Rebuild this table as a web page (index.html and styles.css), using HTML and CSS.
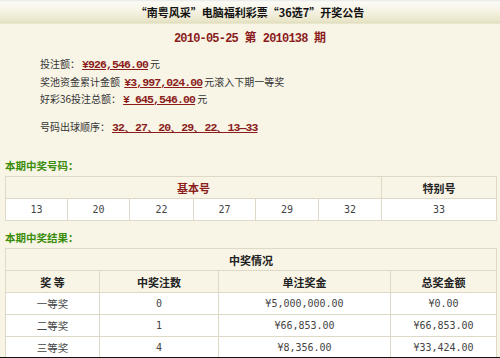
FILE: index.html
```html
<!DOCTYPE html>
<html lang="zh">
<head>
<meta charset="utf-8">
<link rel="stylesheet" href="styles.css">
</head>
<body>
<div class="page">
  <div class="topbar">“南粤风采”电脑福利彩票“36选7”开奖公告</div>
  <div class="date">2010-05-25 <span class="cj">第</span> 2010138 <span class="cj">期</span></div>
  <div class="info">
    <div class="line">投注额：<span class="val">¥926,546.00</span>元</div>
    <div class="line">奖池资金累计金额 <span class="val">¥3,997,024.00</span>元滚入下期一等奖</div>
    <div class="line">好彩36投注总额：<span class="val">¥ 645,546.00</span>元</div>
    <div class="line gap">号码出球顺序：<span class="val">32、27、20、29、22、13—33</span></div>
  </div>
  <div class="heading h1">本期中奖号码：</div>
  <table class="tbl nums">
    <colgroup>
      <col class="c1"><col class="c2"><col class="c3"><col class="c4"><col class="c5"><col class="c6"><col class="c7">
    </colgroup>
    <tr class="head"><th colspan="6" class="red">基本号</th><th>特别号</th></tr>
    <tr class="row"><td>13</td><td>20</td><td>22</td><td>27</td><td>29</td><td>32</td><td>33</td></tr>
  </table>
  <div class="heading h2">本期中奖结果：</div>
  <table class="tbl prize">
    <colgroup>
      <col class="p1"><col class="p2"><col class="p3"><col class="p4">
    </colgroup>
    <tr class="head"><th colspan="4">中奖情况</th></tr>
    <tr class="head"><th>奖 等</th><th>中奖注数</th><th>单注奖金</th><th>总奖金额</th></tr>
    <tr class="row"><td>一等奖</td><td>0</td><td>¥5,000,000.00</td><td>¥0.00</td></tr>
    <tr class="row"><td>二等奖</td><td>1</td><td>¥66,853.00</td><td>¥66,853.00</td></tr>
    <tr class="row"><td>三等奖</td><td>4</td><td>¥8,356.00</td><td>¥33,424.00</td></tr>
  </table>
</div>
</body>
</html>
```
FILE: styles.css
```css
html, body {
  margin: 0;
  padding: 0;
  background: #f8f5e7;
}
.page {
  width: 500px;
  height: 357px;
  overflow: hidden;
  border-bottom: 1px solid #111;
  font-family: "Noto Sans CJK SC", "Liberation Sans", sans-serif;
  font-size: 11px;
  color: #222;
  background: #f8f5e7;
}
.topbar {
  height: 24px;
  line-height: 25px;
  text-align: center;
  font-weight: bold;
  font-size: 11px;
  color: #111;
  background: linear-gradient(to bottom, #e8e8e8 0px, #fbfbf6 2px, #f6f4e6 10px, #ebe7cc 20px, #e2dfc0 23px, #f1eedc 24px);
}
.date {
  margin-top: 5px;
  height: 16px;
  line-height: 16px;
  text-align: center;
  font-family: "Liberation Mono", monospace;
  font-size: 12px;
  font-weight: bold;
  color: #8b1c1c;
  letter-spacing: -0.8px;
}
.date .cj {
  font-family: "Noto Sans CJK SC", sans-serif;
  font-size: 12px;
  letter-spacing: 0;
}
.info {
  margin-top: 10px;
  padding-left: 40px;
  font-size: 10px;
}
.line {
  height: 17.5px;
  line-height: 17px;
  color: #333;
}
.line.gap {
  margin-top: 10px;
}
.val {
  font-family: "Liberation Mono", monospace;
  font-size: 11.5px;
  font-weight: bold;
  color: #8b1c1c;
  text-decoration: underline;
  letter-spacing: -0.9px;
  padding: 0 2px;
}
.heading {
  padding-left: 5px;
  color: #3a8c0a;
  font-weight: bold;
  font-size: 10.5px;
  height: 14px;
  line-height: 14px;
}
.h1 { margin-top: 24px; }
.h2 { margin-top: 10px; }
.tbl {
  margin: 3px 0 0 5px;
  width: 491px;
  border-collapse: collapse;
  table-layout: fixed;
}
.tbl th, .tbl td {
  border: 1px solid #ddd9c6;
  height: 21px;
  padding: 0;
  text-align: center;
  font-size: 11px;
}
.tbl th {
  font-weight: bold;
  color: #222;
}
.tbl th.red {
  color: #8b1c1c;
}
.tbl .row td {
  background: #fff;
  color: #444;
}
.nums .row td {
  font-family: "DejaVu Sans Mono", monospace;
  font-size: 10px;
}
.prize .row td {
  font-size: 10.5px;
}
.prize .row td:nth-child(n+2) {
  font-family: "DejaVu Sans Mono", monospace;
  font-size: 10px;
}
.c1 { width: 62px; }
.c2 { width: 62px; }
.c3 { width: 64px; }
.c4 { width: 62px; }
.c5 { width: 63px; }
.c6 { width: 63px; }
.c7 { width: 115px; }
.p1 { width: 94px; }
.p2 { width: 119px; }
.p3 { width: 172px; }
.p4 { width: 106px; }
```
